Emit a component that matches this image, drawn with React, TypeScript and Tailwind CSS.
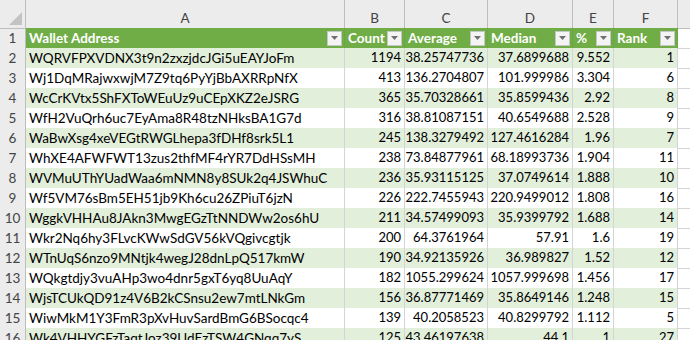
import React from "react";

const rows: [string, string, string, string, string, string][] = [
  ["WQRVFPXVDNX3t9n2zxzjdcJGi5uEAYJoFm", "1194", "38.25747736", "37.6899688", "9.552", "1"],
  ["Wj1DqMRajwxwjM7Z9tq6PyYjBbAXRRpNfX", "413", "136.2704807", "101.999986", "3.304", "6"],
  ["WcCrKVtx5ShFXToWEuUz9uCEpXKZ2eJSRG", "365", "35.70328661", "35.8599436", "2.92", "8"],
  ["WfH2VuQrh6uc7EyAma8R48tzNHksBA1G7d", "316", "38.81087151", "40.6549688", "2.528", "9"],
  ["WaBwXsg4xeVEGtRWGLhepa3fDHf8srk5L1", "245", "138.3279492", "127.4616284", "1.96", "7"],
  ["WhXE4AFWFWT13zus2thfMF4rYR7DdHSsMH", "238", "73.84877961", "68.18993736", "1.904", "11"],
  ["WVMuUThYUadWaa6mNMN8y8SUk2q4JSWhuC", "236", "35.93115125", "37.0749614", "1.888", "10"],
  ["Wf5VM76sBm5EH51jb9Kh6cu26ZPiuT6jzN", "226", "222.7455943", "220.9499012", "1.808", "16"],
  ["WggkVHHAu8JAkn3MwgEGzTtNNDWw2os6hU", "211", "34.57499093", "35.9399792", "1.688", "14"],
  ["Wkr2Nq6hy3FLvcKWwSdGV56kVQgivcgtjk", "200", "64.3761964", "57.91", "1.6", "19"],
  ["WTnUqS6nzo9MNtjk4wegJ28dnLpQ517kmW", "190", "34.92135926", "36.989827", "1.52", "12"],
  ["WQkgtdjy3vuAHp3wo4dnr5gxT6yq8UuAqY", "182", "1055.299624", "1057.999698", "1.456", "17"],
  ["WjsTCUkQD91z4V6B2kCSnsu2ew7mtLNkGm", "156", "36.87771469", "35.8649146", "1.248", "15"],
  ["WiwMkM1Y3FmR3pXvHuvSardBmG6BSocqc4", "139", "40.2058523", "40.8299792", "1.112", "5"],
  ["Wk4VHHYGFzTaqtJoz39UdEzTSW4GNqq7yS", "125", "43.46197638", "44.1", "1", "27"],
];

const headers = ["Wallet Address", "Count", "Average", "Median", "%", "Rank"];
const letters = ["A", "B", "C", "D", "E", "F"];

function Dropdown() {
  return (
    <span className="ml-auto mr-[2px] flex h-[15px] w-[15px] shrink-0 items-center justify-center border border-[#c6c6c6] bg-[#f4f4f4]">
      <svg width="7" height="4" viewBox="0 0 7 4">
        <path d="M0 0h7L3.5 4z" fill="#707070" />
      </svg>
    </span>
  );
}

export default function App() {
  const grid = "grid grid-cols-[26px_319px_60px_83px_85px_41px_64px_1fr]";

  return (
    <div className="h-[340px] w-[690px] overflow-hidden bg-white text-[13.5px] text-black" style={{ fontFamily: "Lato, 'Liberation Sans', sans-serif" }}>
      {/* column letters */}
      <div className={`${grid} h-[28px] bg-[#ececec] text-[#444]`}>
        <div className="relative border-b border-r border-[#bdbdbd]">
          <svg className="absolute bottom-[3px] right-[3px]" width="13" height="13" viewBox="0 0 13 13">
            <path d="M13 0V13H0z" fill="#c3c3c3" />
          </svg>
        </div>
        {letters.map((l) => (
          <div key={l} className="flex items-center justify-center border-b border-r border-[#bdbdbd] pt-[8px]">
            {l}
          </div>
        ))}
        <div className="border-b border-[#bdbdbd]" />
      </div>

      {/* header row */}
      <div className={`${grid} h-[20px]`}>
        <div className="flex items-center justify-center border-b border-r border-[#bdbdbd] bg-[#ececec] text-[#444]">1</div>
        {headers.map((h) => (
          <div key={h} className="flex min-w-0 items-center border-b border-r border-[#6ba544] bg-[#70ad47] pl-[3px] font-bold text-white">
            <span className="whitespace-nowrap">{h}</span>
            <Dropdown />
          </div>
        ))}
        <div className="border-b border-[#d4d4d4]" />
      </div>

      {rows.map((r, i) => {
        const band = i % 2 === 0 ? "bg-[#e2efda]" : "bg-white";
        return (
          <div key={i} className={`${grid} h-[20px]`}>
            <div className="flex items-center justify-center border-b border-r border-[#bdbdbd] bg-[#ececec] text-[#444]">{i + 2}</div>
            <div className={`flex min-w-0 items-center whitespace-nowrap border-b border-r border-b-[#a9d08e] border-r-[#d4d4d4] pl-[3px] ${band}`}>{r[0]}</div>
            {r.slice(1).map((v, j) => (
              <div key={j} className={`flex min-w-0 items-center justify-end whitespace-nowrap border-b border-r border-b-[#a9d08e] border-r-[#d4d4d4] pr-[3px] text-[13px] ${band}`}>
                {v}
              </div>
            ))}
            <div className="border-b border-[#d4d4d4]" />
          </div>
        );
      })}
    </div>
  );
}
